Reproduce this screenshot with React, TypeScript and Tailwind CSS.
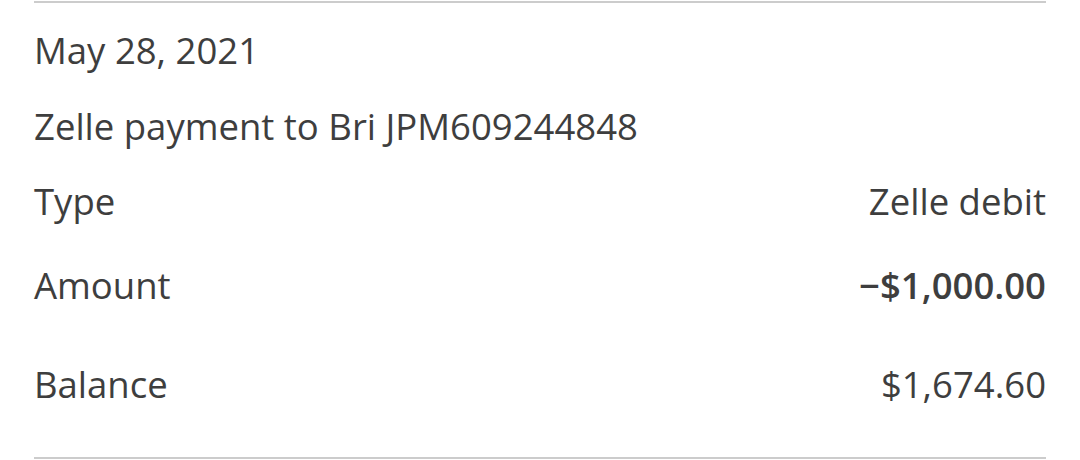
import React from 'react';

const Row: React.FC<{ label: string; value: string; bold?: boolean; className?: string }> = ({
  label,
  value,
  bold,
  className = '',
}) => (
  <div className={`flex items-center justify-between ${className}`}>
    <span>{label}</span>
    <span className={bold ? 'font-semibold' : ''}>{value}</span>
  </div>
);

export default function App() {
  return (
    <div className="w-[1080px] h-[460px] bg-white pt-px" style={{ fontFamily: '"Open Sans", sans-serif' }}>
      <div className="mx-[34px] h-[458px] border-y-2 border-[#cccccc] text-[#3e3e3e] text-[36.5px] leading-[46px] flex flex-col">
        <div className="mt-[24px]">May 28, 2021</div>
        <div className="mt-[30px]">Zelle payment to Bri JPM609244848</div>
        <Row className="mt-[29px]" label="Type" value="Zelle debit" />
        <Row className="mt-[38px]" label="Amount" value="−$1,000.00" bold />
        <Row className="mt-[53px]" label="Balance" value="$1,674.60" />
      </div>
    </div>
  );
}
